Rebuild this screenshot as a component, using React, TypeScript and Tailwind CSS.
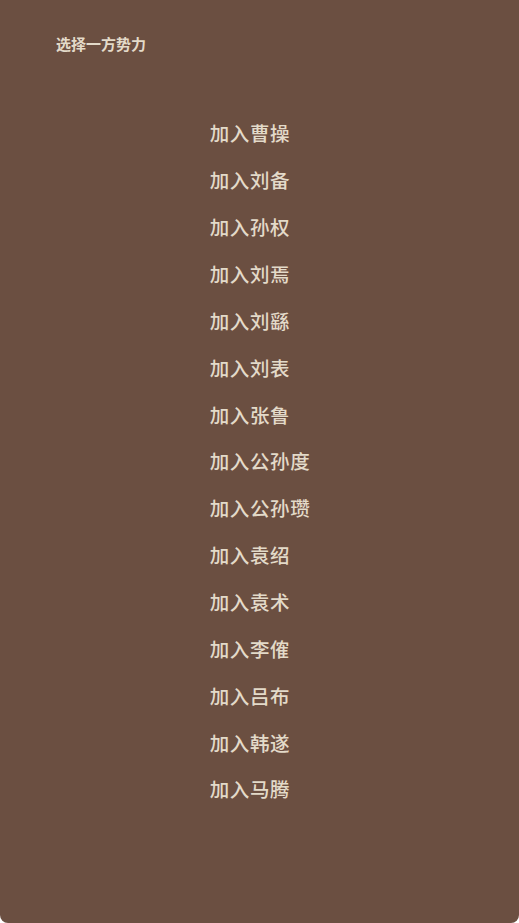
const factions = [
  "曹操",
  "刘备",
  "孙权",
  "刘焉",
  "刘繇",
  "刘表",
  "张鲁",
  "公孙度",
  "公孙瓒",
  "袁绍",
  "袁术",
  "李傕",
  "吕布",
  "韩遂",
  "马腾",
];

export default function App() {
  return (
    <div
      className="h-[923px] w-[519px] rounded-b-lg bg-[#6b4f41] text-[#e3dac9]"
      style={{ fontFamily: '"Noto Sans CJK SC", "Noto Sans", sans-serif' }}
    >
      <div className="px-[56px] pt-[34px]">
        <h2 className="text-[15px] font-bold leading-[20px]">选择一方势力</h2>
      </div>

      <div className="mx-auto mt-[56px] flex w-fit flex-col items-start pl-[1px]">
        {factions.map((name) => (
          <button
            key={name}
            className="h-[46.86px] text-[19.5px] font-medium leading-[46px] tracking-[0.6px]"
          >
            加入{name}
          </button>
        ))}
      </div>
    </div>
  );
}
